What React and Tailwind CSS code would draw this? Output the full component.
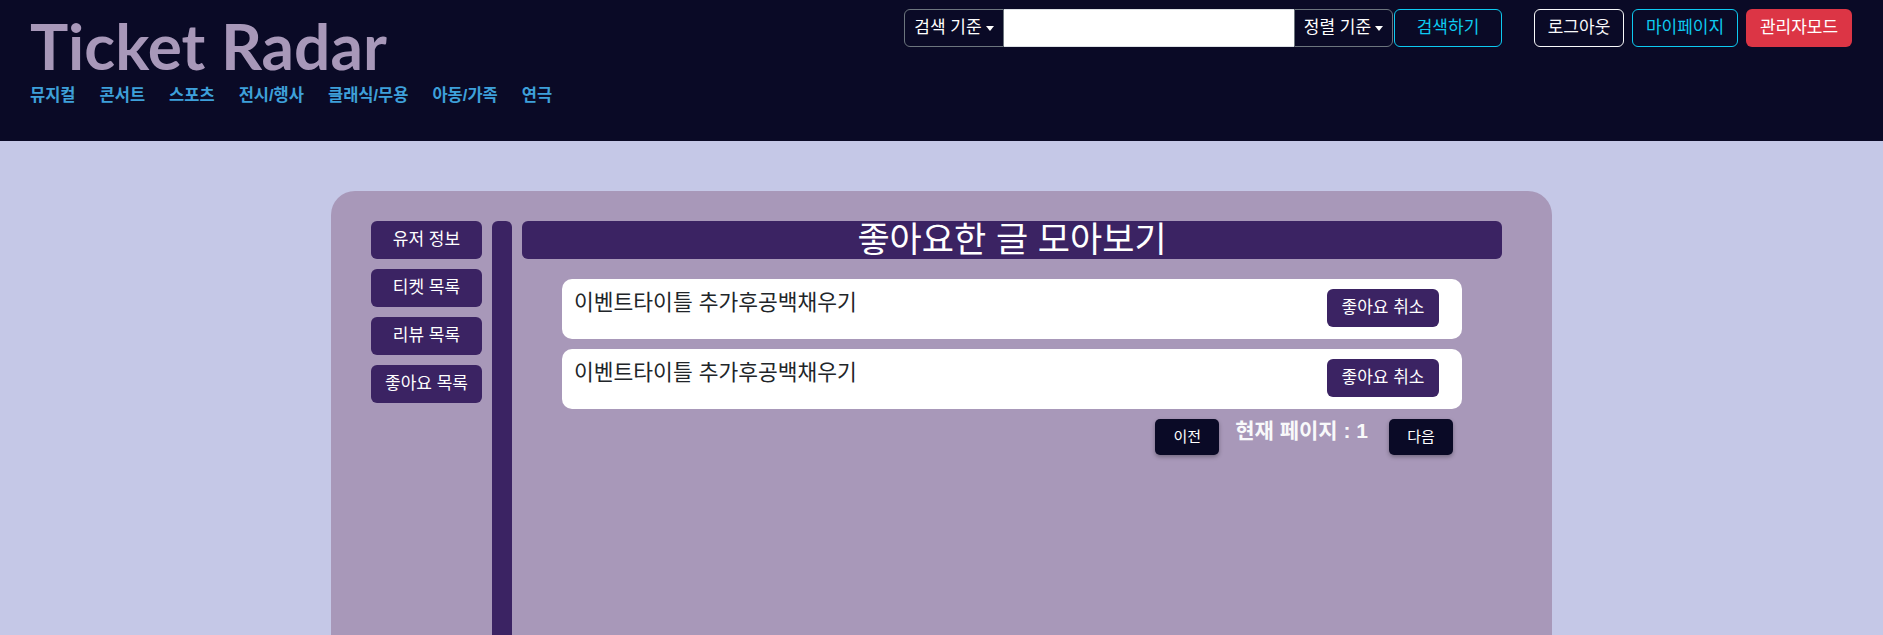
const categories = ["뮤지컬", "콘서트", "스포츠", "전시/행사", "클래식/무용", "아동/가족", "연극"];
const sideMenu = ["유저 정보", "티켓 목록", "리뷰 목록", "좋아요 목록"];
const likedPosts = [
  { id: 1, title: "이벤트타이틀 추가후공백채우기" },
  { id: 2, title: "이벤트타이틀 추가후공백채우기" },
];

const Caret = () => (
  <span className="ml-[4px] inline-block w-0 h-0 border-x-[4px] border-x-transparent border-t-[5px] border-t-white" />
);

const Header = () => {
  return (
    <header className="h-[141px] shrink-0 bg-[#0a0a26] flex justify-between pl-[30px] pr-[31px]">
      <div className="pt-[10px]">
        <h1 className="text-[64px] leading-[72px] font-bold text-[#a898b9] font-['Lato',sans-serif]">
          Ticket Radar
        </h1>
        <nav className="mt-[1px] flex gap-[24px] text-[16.5px] leading-[24px] font-semibold text-[#3ea0da]">
          {categories.map((c) => (
            <a key={c} href="#" className="hover:text-white">
              {c}
            </a>
          ))}
        </nav>
      </div>

      <div className="flex items-start pt-[9px]">
        <div className="flex h-[38px]">
          <button className="w-[100px] flex items-center justify-center border border-[#6c757d] rounded-l-[6px] text-white text-[17px]">
            검색 기준
            <Caret />
          </button>
          <input className="w-[290px] bg-white border-y border-[#dee2e6] outline-none px-[12px] text-[16px]" />
          <button className="w-[99px] flex items-center justify-center border border-[#6c757d] rounded-r-[6px] text-white text-[17px]">
            정렬 기준
            <Caret />
          </button>
        </div>
        <button className="ml-[1px] w-[108px] h-[38px] border border-[#0dcaf0] rounded-[6px] text-[#0dcaf0] text-[17px]">
          검색하기
        </button>
        <button className="ml-[32px] w-[90px] h-[38px] border border-[#f8f9fa] rounded-[6px] text-[#f8f9fa] text-[17px]">
          로그아웃
        </button>
        <button className="ml-[8px] w-[106px] h-[38px] border border-[#0dcaf0] rounded-[6px] text-[#0dcaf0] text-[17px]">
          마이페이지
        </button>
        <button className="ml-[8px] w-[106px] h-[38px] bg-[#dc3545] rounded-[6px] text-white text-[17px]">
          관리자모드
        </button>
      </div>
    </header>
  );
};

const App = () => {
  return (
    <div className="h-screen overflow-hidden flex flex-col bg-[#c5c8e7] font-['Liberation_Sans','Noto_Sans_CJK_KR',sans-serif]">
      <Header />

      <main className="pt-[50px]">
        <div className="mx-auto w-[1221px] h-[600px] rounded-[24px] bg-[#a898b9] pt-[30px] pl-[40px] pr-[50px] flex gap-[10px]">
          <div className="w-[111px] flex flex-col gap-[10px]">
            {sideMenu.map((m) => (
              <button key={m} className="h-[38px] rounded-[6px] bg-[#3b2363] text-white text-[17px]">
                {m}
              </button>
            ))}
          </div>

          <div className="w-[20px] rounded-t-[6px] bg-[#3b2363]" />

          <div className="flex-1 flex flex-col">
            <h2 className="h-[38px] rounded-[6px] bg-[#3b2363] text-white text-[35px] leading-[38px] text-center">
              좋아요한 글 모아보기
            </h2>

            <div className="mt-[20px] px-[40px] flex flex-col gap-[10px]">
              {likedPosts.map((post) => (
                <div
                  key={post.id}
                  className="h-[60px] bg-white rounded-[10px] flex justify-between items-start pl-[12px] pr-[23px] pt-[10px]"
                >
                  <span className="mt-[1px] text-[21.5px] leading-[26px] text-[#212529]">{post.title}</span>
                  <button className="w-[112px] h-[38px] rounded-[6px] bg-[#3b2363] text-white text-[17px]">
                    좋아요 취소
                  </button>
                </div>
              ))}

              <div className="flex justify-end items-start pr-[9px]">
                <button className="w-[64px] h-[36px] rounded-[5px] bg-[#0a0a26] text-white text-[15px] shadow-[0_2px_4px_rgba(0,0,0,0.3)]">
                  이전
                </button>
                <span className="ml-[16px] text-[21px] leading-[24px] font-bold text-[#f8f9fa]">현재 페이지 : 1</span>
                <button className="ml-[21px] w-[64px] h-[36px] rounded-[5px] bg-[#0a0a26] text-white text-[15px] shadow-[0_2px_4px_rgba(0,0,0,0.3)]">
                  다음
                </button>
              </div>
            </div>
          </div>
        </div>
      </main>
    </div>
  );
};

export default App;
